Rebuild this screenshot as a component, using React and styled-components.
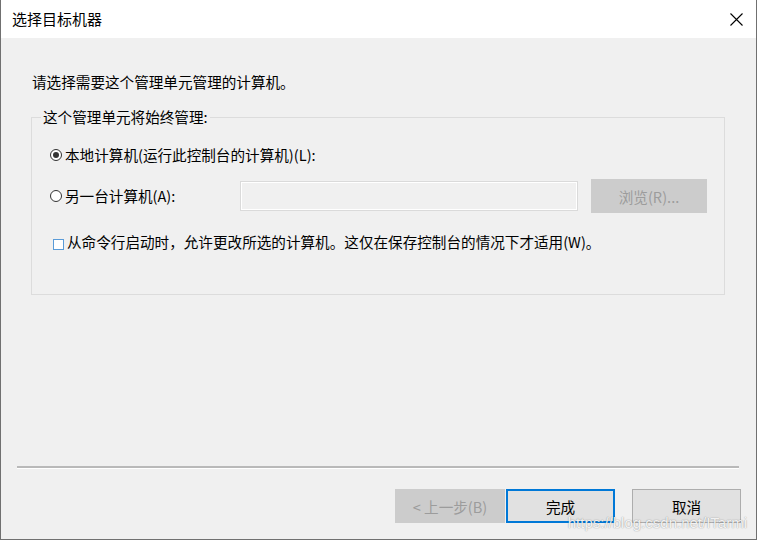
import React from 'react';
import styled, { createGlobalStyle } from 'styled-components';

const GlobalStyle = createGlobalStyle`
    html, body {
        margin: 0;
        padding: 0;
        background: #ffffff;
    }
    body {
        font-family: 'Noto Sans CJK SC', 'Noto Sans', sans-serif;
        color: #000;
    }
`;

const FONT = `'Noto Sans CJK SC', 'Noto Sans', sans-serif`;

export default function App() {
    return (
        <>
            <GlobalStyle />
            <Window>
                <TitleBar>
                    <Title>选择目标机器</Title>
                    <CloseButton aria-label='关闭'>
                        <svg width='13' height='13' viewBox='0 0 13 13'>
                            <path d='M0.5 0.5 L12.5 12.5 M12.5 0.5 L0.5 12.5' stroke='#000' strokeWidth='1.1' fill='none' />
                        </svg>
                    </CloseButton>
                </TitleBar>

                <Body>
                    <Intro>请选择需要这个管理单元管理的计算机。</Intro>

                    <Group>
                        <Legend>这个管理单元将始终管理:</Legend>

                        <OptionRow>
                            <Radio checked />
                            <OptionText>本地计算机(运行此控制台的计算机)(L):</OptionText>
                        </OptionRow>

                        <RemoteRow>
                            <LabelCell>
                                <Radio />
                                <OptionText>另一台计算机(A):</OptionText>
                            </LabelCell>
                            <TextBox />
                            <Button disabled>浏览(R)...</Button>
                        </RemoteRow>

                        <CheckRow>
                            <CheckBox />
                            <OptionText>从命令行启动时，允许更改所选的计算机。这仅在保存控制台的情况下才适用(W)。</OptionText>
                        </CheckRow>
                    </Group>

                    <Footer>
                        <Separator />
                        <ButtonRow>
                            <Button disabled $width={110}>&lt; 上一步(B)</Button>
                            <Button $primary $width={109}>完成</Button>
                            <Button $width={109} $gap={16}>取消</Button>
                        </ButtonRow>
                    </Footer>
                </Body>

                <Watermark>https://blog.csdn.net/ITarmi</Watermark>
            </Window>
        </>
    );
}

const Window = styled.div`
    position: relative;
    width: 757px;
    height: 540px;
    box-sizing: border-box;
    border: 1px solid #707070;
    border-top: none;
    display: flex;
    flex-direction: column;
    background: #f0f0f0;
    overflow: hidden;
`;

const TitleBar = styled.div`
    height: 38px;
    flex: none;
    background: #ffffff;
    display: flex;
    align-items: center;
    justify-content: space-between;
    padding: 0 13px 0 11px;
`;

const Title = styled.span`
    font-family: ${FONT};
    font-size: 15px;
    line-height: 20px;
    color: #000;
`;

const CloseButton = styled.span`
    width: 13px;
    height: 13px;
    display: flex;
    margin-top: 1px;
`;

const Body = styled.div`
    flex: 1;
    display: flex;
    flex-direction: column;
    padding-top: 34px;
`;

const Intro = styled.div`
    font-family: ${FONT};
    font-size: 14.6px;
    line-height: 20px;
    padding-left: 31px;
`;

const Group = styled.fieldset`
    margin: 16px 31px 0 30px;
    padding: 19px 17px 42px 18px;
    border: 1px solid #dcdcdc;
    min-width: 0;
`;

const Legend = styled.legend`
    font-family: ${FONT};
    font-size: 14.6px;
    line-height: 18px;
    padding: 0 2px;
    margin-left: -9px;
`;

const OptionRow = styled.div`
    display: flex;
    align-items: center;
    height: 20px;
`;

const RemoteRow = styled.div`
    display: grid;
    grid-template-columns: 177px 1fr 116px;
    align-items: center;
    column-gap: 13px;
    height: 34px;
    margin-top: 14px;
`;

const LabelCell = styled.div`
    display: flex;
    align-items: center;
`;

const CheckRow = styled.div`
    display: flex;
    align-items: center;
    height: 20px;
    margin-top: 19px;
`;

const OptionText = styled.span`
    font-family: ${FONT};
    font-size: 14.6px;
    line-height: 20px;
    white-space: nowrap;
`;

const Radio = styled.span`
    width: 12px;
    height: 12px;
    box-sizing: border-box;
    border-radius: 50%;
    border: 1px solid #333;
    background: #fff;
    margin-right: 3px;
    flex: none;
    display: flex;
    align-items: center;
    justify-content: center;
    &::after {
        content: '';
        width: 6px;
        height: 6px;
        border-radius: 50%;
        background: ${p => (p.checked ? '#333' : 'transparent')};
    }
`;

const CheckBox = styled.span`
    width: 11px;
    height: 11px;
    box-sizing: border-box;
    border: 1px solid #5a9bd8;
    background: #fff;
    margin: 5px 3px 0 3px;
    flex: none;
`;

const TextBox = styled.div`
    height: 30px;
    box-sizing: border-box;
    border: 1px solid #dadada;
    box-shadow: inset 0 0 0 1px #ffffff;
    background: #f0f0f0;
`;

const Button = styled.button`
    width: ${p => (p.$width ? `${p.$width}px` : '100%')};
    height: 34px;
    box-sizing: border-box;
    margin: 0 0 0 ${p => p.$gap || 0}px;
    padding: 0;
    font-family: ${FONT};
    font-size: 14.6px;
    border: ${p => (p.$primary ? '2px solid #0078d7' : '1px solid #adadad')};
    background: #e1e1e1;
    color: #000;
    &:disabled {
        background: #cccccc;
        border-color: #cccccc;
        color: #9c9c9c;
    }
`;

const Footer = styled.div`
    margin-top: auto;
    padding: 0 15px 16px 16px;
`;

const Separator = styled.div`
    height: 2px;
    background: #b9b9b9;
    border-bottom: 1px solid #ffffff;
    margin-right: 2px;
`;

const ButtonRow = styled.div`
    display: flex;
    justify-content: flex-end;
    gap: 1px;
    margin-top: 20px;
`;

const Watermark = styled.div`
    position: absolute;
    right: 9px;
    bottom: 8px;
    font-family: 'Liberation Sans', Arial, sans-serif;
    font-size: 15px;
    color: rgba(255, 255, 255, 0.9);
    text-shadow: 0 0 1px rgba(0, 0, 0, 0.35), 0 0 2px rgba(0, 0, 0, 0.15);
    pointer-events: none;
`;
